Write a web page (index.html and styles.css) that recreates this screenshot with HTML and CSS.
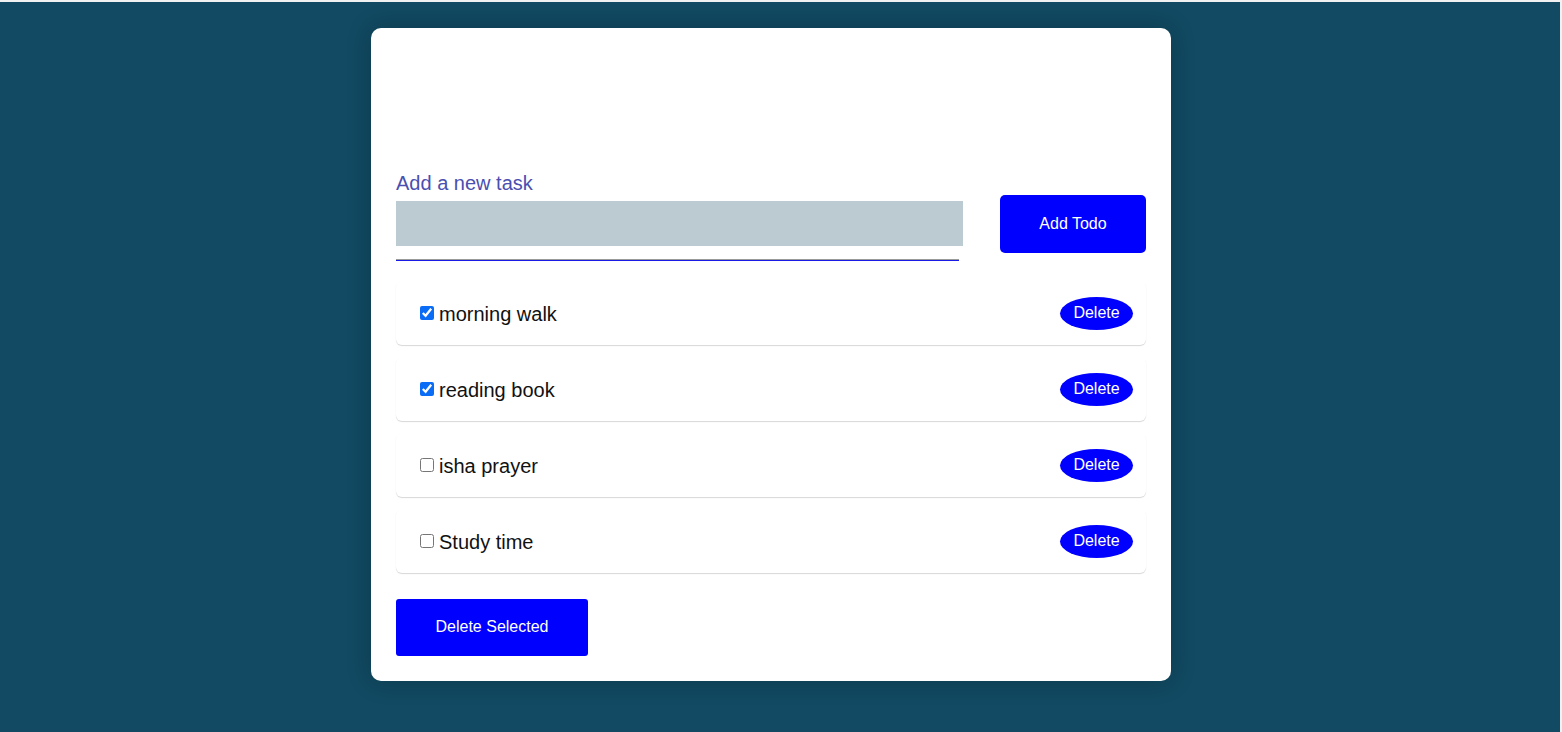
FILE: index.html
```html
<!DOCTYPE html>
<html>
<head>
<meta charset="utf-8">
<link rel="stylesheet" href="styles.css">
</head>
<body>
<div class="page">
  <div class="card">
    <div class="form-row">
      <div class="field">
        <label class="field-label">Add a new task</label>
        <input class="field-input" type="text">
        <div class="field-line"></div>
      </div>
      <button class="btn add-btn">Add Todo</button>
    </div>
    <ul class="list">
      <li class="item"><input type="checkbox" checked><span class="item-text">morning walk</span><button class="del-btn">Delete</button></li>
      <li class="item"><input type="checkbox" checked><span class="item-text">reading book</span><button class="del-btn">Delete</button></li>
      <li class="item"><input type="checkbox"><span class="item-text">isha prayer</span><button class="del-btn">Delete</button></li>
      <li class="item"><input type="checkbox"><span class="item-text">Study time</span><button class="del-btn">Delete</button></li>
    </ul>
    <button class="btn sel-btn">Delete Selected</button>
  </div>
</div>
</body>
</html>
```
FILE: styles.css
```css
html, body {
  margin: 0;
  padding: 0;
  background: #f1f1f1;
  font-family: "Liberation Sans", Arial, sans-serif;
  overflow: hidden;
}
.page {
  margin-top: 2px;
  margin-right: 2px;
  height: 730px;
  background: #114a62;
  display: flex;
  justify-content: center;
  align-items: flex-start;
  padding: 26px 18px 0 0;
  box-sizing: border-box;
}
.card {
  width: 800px;
  height: 653px;
  box-sizing: border-box;
  background: #fff;
  border-radius: 10px;
  box-shadow: 0 0 24px rgba(0, 0, 0, 0.22);
  padding: 144px 25px 25px 25px;
}
.form-row {
  display: flex;
  align-items: flex-start;
}
.field {
  width: 567px;
  display: flex;
  flex-direction: column;
}
.field-label {
  font-size: 20px;
  line-height: 23px;
  color: #4a4fb0;
}
.field-input {
  margin: 6px 0 0 0;
  height: 45px;
  border: none;
  background: #bccbd1;
  box-sizing: border-box;
  padding: 0 8px;
  outline: none;
}
.field-line {
  margin-top: 13px;
  width: 563px;
  height: 1px;
  border-top: 1px solid #9a9a9a;
  background: #1a1ae6;
}
.btn {
  border: none;
  background: #0000ff;
  color: #fff;
  font-family: "Liberation Sans", Arial, sans-serif;
  font-size: 16px;
  cursor: pointer;
}
.add-btn {
  margin: 23px 0 0 37px;
  width: 146px;
  height: 58px;
  border-radius: 5px;
}
.list {
  list-style: none;
  margin: 20px 0 0 0;
  padding: 0;
  display: flex;
  flex-direction: column;
  gap: 12px;
}
.item {
  height: 64px;
  box-sizing: border-box;
  display: flex;
  align-items: center;
  padding: 0 12px 0 20px;
  border-radius: 6px;
  box-shadow: 0 1px 1px rgba(0, 0, 0, 0.16);
}
.item input {
  margin: 0 2px 1px 4px;
  width: 14px;
  height: 14px;
  accent-color: #0b6cf5;
}
.item-text {
  margin-left: 3px;
  padding-top: 2px;
  font-size: 20px;
  color: #111;
  flex: 1;
}
.del-btn {
  width: 73px;
  height: 33px;
  border: none;
  border-radius: 50%;
  background: #0000ff;
  color: #fff;
  font-family: "Liberation Sans", Arial, sans-serif;
  font-size: 16px;
  padding: 0 0 0 0;
  margin-right: 1px;
}
.sel-btn {
  margin-top: 26px;
  width: 192px;
  height: 57px;
  border-radius: 3px;
  padding-bottom: 2px;
}
```
